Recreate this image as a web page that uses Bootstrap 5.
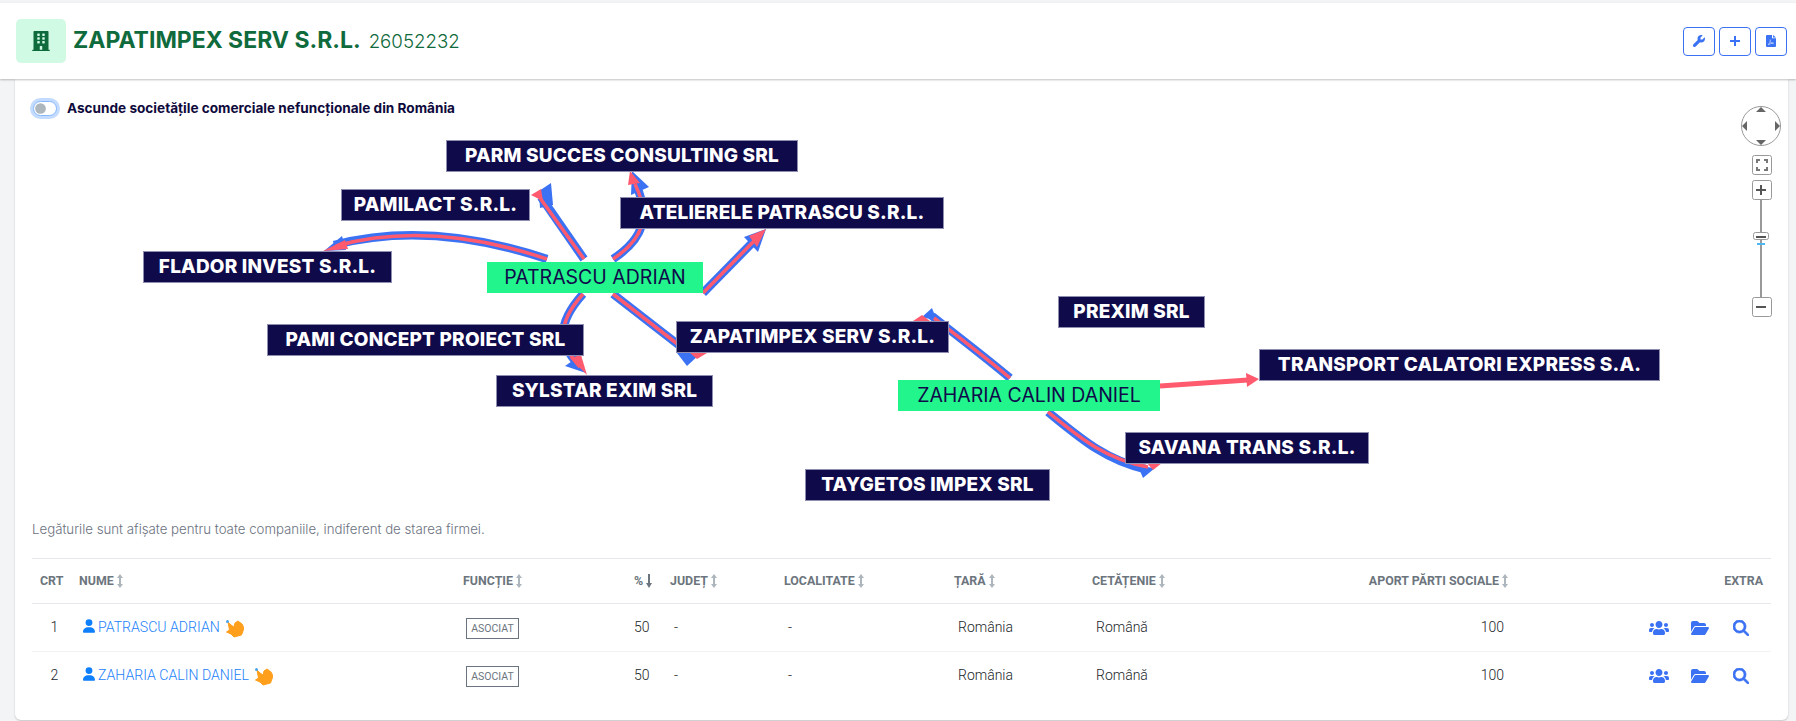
<!DOCTYPE html>
<html lang="ro">
  <head>
    <meta charset="UTF-8" />
    <title>ZAPATIMPEX SERV S.R.L.</title>
    <link href="https://cdn.jsdelivr.net/npm/bootstrap@5.3.3/dist/css/bootstrap.min.css" rel="stylesheet" />
    <style>
      html, body { height: 721px; overflow: hidden; }
      body { background: #f3f4f6; padding-top: 3px; font-family: Roboto, sans-serif; }

      /* header */
      .top-head { height: 76px; background: #fff; padding: 0 9px 0 16px; box-shadow: 0 1px 2px rgba(0,0,0,.25); position: relative; z-index: 2; }
      .head-ico { width: 50px; height: 44px; background: #d1fae5; border-radius: 5px; color: #0f6a3c; }
      .head-ico svg { width: 18px; height: 20px; fill: currentColor; }
      .head-name { font-family: Inter, sans-serif; font-weight: 700; font-size: 23px; color: #0f6a3c; margin: 0 0 0 7px; }
      .head-code { font-family: Inter, sans-serif; font-weight: 300; font-size: 18.700px; margin-left: 8px; color: #0f6a3c; }
      .head-btn { width: 32px; height: 29px; padding: 0; border-color: #3b71f3; color: #3b71f3; border-radius: 4px; }
      .head-btn svg { fill: #3b71f3; }

      /* main panel */
      .main-panel { height: 641px; margin: 0 8px 0 15px; background: #fff; border-radius: 0 0 6px 6px; box-shadow: 0 1px 2px rgba(0,0,0,.2); }
      .graph-wrap { position: relative; }
      .toggle-row { height: 41px; padding: 17px 0 0 18px; }
      .toggle-row .form-check-input { margin: 0 10px 0 0; width: 24px; height: 15px; border-color: #86b7fe; box-shadow: 0 0 0 3px rgba(13,110,253,.25); background-image: url("data:image/svg+xml,%3csvg xmlns='http://www.w3.org/2000/svg' viewBox='-4 -4 8 8'%3e%3ccircle r='3.300' fill='%23adb5bd'/%3e%3c/svg%3e"); }
      .toggle-row label { font-family: Inter, sans-serif; font-weight: 700; font-size: 13.600px; color: #0f0a3c; }
      .graph { position: relative; height: 399px; }
      .graph-lines { position: absolute; left: 0; top: 0; width: 1773px; height: 399px; }
      .nav-ctl { position: absolute; left: 1725px; top: 21px; width: 48px; height: 220px; }

      /* nodes of the diagram, left/top = page coord minus (15,120) */
      .gnode { position: absolute; height: 32px; display: flex; align-items: center; justify-content: center; font-family: Inter, sans-serif; white-space: nowrap; }
      .gnode.firm { background: #0f0a4a; color: #fff; font-weight: 800; font-size: 19px; letter-spacing: .2px; border: 1px solid #8f8db0; }
      .gnode.pers { background: #22f58b; color: #0f0a4a; font-weight: 400; font-size: 19.500px; }
      #n-parm { left: 431px; top: 20px; width: 352px; }
      #n-pamilact { left: 326px; top: 69px; width: 189px; }
      #n-flador { left: 128px; top: 131px; width: 249px; }
      #n-patrascu { left: 472px; top: 142px; width: 216px; height: 31px; }
      #n-pami { left: 252px; top: 204px; width: 317px; }
      #n-sylstar { left: 481px; top: 255px; width: 217px; }
      #n-atelier { left: 605px; top: 77px; width: 324px; }
      #n-zapa { left: 661px; top: 201px; width: 273px; }
      #n-zaharia { left: 883px; top: 260px; width: 262px; height: 31px; }
      #n-prexim { left: 1043px; top: 176px; width: 147px; }
      #n-transport { left: 1244px; top: 229px; width: 401px; }
      #n-savana { left: 1110px; top: 312px; width: 244px; }
      #n-taygetos { left: 790px; top: 349px; width: 245px; }

      .graph-note { font-family: Inter, sans-serif; font-weight: 300; font-size: 13.250px; color: #6b7280; line-height: 20px; margin: 0 0 19px 17px; }

      /* table */
      .assoc-wrap { margin: 0 17px; }
      .assoc { table-layout: fixed; width: 1739px; margin: 0; border-top: 1px solid #e5e7eb; }
      .assoc th { height: 45px; padding: 0 8px; font-size: 12.400px; font-weight: 700; color: #6c757d; text-transform: uppercase; white-space: nowrap; border-bottom: 1px solid #e5e7eb; vertical-align: middle; }
      .assoc td { height: 48px; padding: 0 8px; font-size: 14px; font-weight: 300; color: #212529; border-bottom: 1px solid #f1f2f4; vertical-align: middle; white-space: nowrap; }
      .assoc tr:last-child td { border-bottom: 0; }
      .assoc td.pad-x { padding-left: 12px; }
      .assoc td.pad-r { padding-right: 12px; }
      .assoc td.pad-n { padding-left: 14px; }
      .assoc td.pad-f { padding-left: 11px; }
      .srt { width: 6px; height: 14px; margin-left: 3px; vertical-align: -3px; }
      .person-link { color: #1a82fb; text-decoration: none; font-size: 14.100px; }
      .person-link svg.u { width: 12px; height: 14px; fill: #0d7efc; margin: 0 3px 0 4px; vertical-align: -1px; }
      .person-link svg.h { width: 18px; height: 18px; margin-left: 6px; vertical-align: -6px; }
      .func-tag { display: inline-block; width: 53px; height: 21px; line-height: 19px; border: 1px solid #6b7280; font-size: 10.500px; font-weight: 400; color: #6c757d; text-align: center; }
      .row-acts { gap: 22px; padding-right: 14px; }
      .row-acts svg { fill: #3b71f3; height: 16px; }
      .row-acts svg:nth-child(2) { margin-right: 2px; }
      .row-acts svg:nth-child(3) { stroke: #3b71f3; stroke-width: 24; }
    </style>
  </head>
  <body>
    <header class="top-head d-flex align-items-center justify-content-between">
      <div class="d-flex align-items-center">
        <div class="head-ico d-flex align-items-center justify-content-center">
          <svg viewBox="0 0 448 512"><path d="M436 480h-20V24c0-13.255-10.745-24-24-24H56C42.745 0 32 10.745 32 24v456H12c-6.627 0-12 5.373-12 12v20h448v-20c0-6.627-5.373-12-12-12zM128 76c0-6.627 5.373-12 12-12h40c6.627 0 12 5.373 12 12v40c0 6.627-5.373 12-12 12h-40c-6.627 0-12-5.373-12-12V76zm0 96c0-6.627 5.373-12 12-12h40c6.627 0 12 5.373 12 12v40c0 6.627-5.373 12-12 12h-40c-6.627 0-12-5.373-12-12v-40zm52 148h-40c-6.627 0-12-5.373-12-12v-40c0-6.627 5.373-12 12-12h40c6.627 0 12 5.373 12 12v40c0 6.627-5.373 12-12 12zm76 160h-64v-84c0-6.627 5.373-12 12-12h40c6.627 0 12 5.373 12 12v84zm64-172c0 6.627-5.373 12-12 12h-40c-6.627 0-12-5.373-12-12v-40c0-6.627 5.373-12 12-12h40c6.627 0 12 5.373 12 12v40zm0-96c0 6.627-5.373 12-12 12h-40c-6.627 0-12-5.373-12-12v-40c0-6.627 5.373-12 12-12h40c6.627 0 12 5.373 12 12v40zm0-96c0 6.627-5.373 12-12 12h-40c-6.627 0-12-5.373-12-12V76c0-6.627 5.373-12 12-12h40c6.627 0 12 5.373 12 12v40z"/></svg>
        </div>
        <h1 class="head-name">ZAPATIMPEX SERV S.R.L.<span class="head-code">26052232</span></h1>
      </div>
      <div class="d-flex gap-1">
        <button class="btn head-btn d-flex align-items-center justify-content-center" type="button">
          <svg width="12" height="12" viewBox="0 0 512 512"><path d="M352 320c88.400 0 160-71.600 160-160c0-15.300-2.200-30.100-6.200-44.200c-3.100-10.800-16.400-13.200-24.300-5.300l-76.800 76.800c-3 3-7.100 4.700-11.300 4.700H336c-8.800 0-16-7.200-16-16V118.600c0-4.200 1.700-8.300 4.700-11.300l76.800-76.800c7.900-7.900 5.400-21.200-5.300-24.300C382.100 2.200 367.300 0 352 0C263.600 0 192 71.600 192 160c0 19.100 3.400 37.500 9.500 54.500L19.900 396.100C7.200 408.800 0 426.100 0 444.100C0 481.600 30.400 512 67.900 512c18 0 35.300-7.200 48-19.900L297.500 310.500c17 6.200 35.400 9.500 54.500 9.500z"/></svg>
        </button>
        <button class="btn head-btn d-flex align-items-center justify-content-center" type="button">
          <svg width="10" height="10" viewBox="0 0 10 10"><path d="M4 0h2v4h4v2H6v4H4V6H0V4h4z"/></svg>
        </button>
        <button class="btn head-btn d-flex align-items-center justify-content-center" type="button">
          <svg width="10" height="12" viewBox="0 0 10 12"><path d="M1 0h5v3.200h4V11a1 1 0 0 1-1 1H1a1 1 0 0 1-1-1V1a1 1 0 0 1 1-1zM7 0l3 2.400H7z"/><path d="M4.200 4.500c.5 2-.6 4-2.200 5.200M4.500 7c1 1 2.500 1.300 3.500 1.100M2.500 9.700c1.500-1 3-1.500 4.500-1.600" fill="none" stroke="#cfdcfd" stroke-width=".8"/></svg>
        </button>
      </div>
    </header>

    <main class="main-panel">
      <div class="graph-wrap">
        <div class="toggle-row">
          <div class="form-check form-switch d-flex align-items-center m-0 p-0">
            <input class="form-check-input" type="checkbox" id="hideInactive" />
            <label class="form-check-label" for="hideInactive">Ascunde societățile comerciale nefuncționale din România</label>
          </div>
        </div>

        <div class="graph">
          <svg class="graph-lines" viewBox="15 120 1773 399" fill="none" stroke-linecap="butt">
            <!-- blue edges -->
            <g stroke="#3b71f3" stroke-width="8.500">
              <path d="M547 259Q430 220 334 245" />
              <path d="M584 259L541 197" />
              <path d="M613 259C645 238 650 215 636 185" />
              <path d="M703 293L755 240" />
              <path d="M583 294C555 325 560 345 578 364" />
              <path d="M613 294L680 346" />
              <path d="M1010 378C985 357 965 342 932 316" />
              <path d="M1048 412C1080 438 1105 460 1145 469" />
            </g>
            <g fill="#3b71f3">
              <path d="M551 183L553 205L540 208L539 191Z" />
              <path d="M342 236L346 250L324 251Z" />
              <path d="M649 187L631 195L632 171Z" />
              <path d="M744 237L766 229L758 252Z" />
              <path d="M565 366L578 357L586 373Z" />
              <path d="M677 353L687 366L701 353Z" />
              <path d="M932 308L922 317L937 321Z" />
              <path d="M1143 478L1138 466L1155 468Z" />
            </g>
            <!-- red edges -->
            <g stroke="#ff5a6e" stroke-width="3.500">
              <path d="M547 259Q430 220 336 246" />
              <path d="M584 259L540 198" />
              <path d="M613 259C645 238 650 215 635 184" />
              <path d="M703 293L755 240" />
              <path d="M583 294C555 325 560 345 580 367" />
              <path d="M613 294L680 346" />
              <path d="M1010 378C985 357 965 342 934 318" />
              <path d="M1048 412C1080 438 1105 459 1148 467" />
              <path d="M1160 386L1248 380" stroke-width="5" />
            </g>
            <g fill="#ff5a6e">
              <path d="M323 251L345 240L348 249Z" />
              <path d="M531 195L541 189L543 201Z" />
              <path d="M630 171L640 183L628 185Z" />
              <path d="M766 229L749 236L757 247Z" />
              <path d="M587 375L570 358L581 355Z" />
              <path d="M707 353L690 353L697 359Z" />
              <path d="M913 321L922 315L930 321Z" />
              <path d="M1162 463L1147 463L1153 470Z" />
              <path d="M1259 379L1246 373L1247 387Z" />
            </g>
          </svg>

          <div class="gnode firm" id="n-parm">PARM SUCCES CONSULTING SRL</div>
          <div class="gnode firm" id="n-pamilact">PAMILACT S.R.L.</div>
          <div class="gnode firm" id="n-flador">FLADOR INVEST S.R.L.</div>
          <div class="gnode firm" id="n-pami">PAMI CONCEPT PROIECT SRL</div>
          <div class="gnode firm" id="n-sylstar">SYLSTAR EXIM SRL</div>
          <div class="gnode firm" id="n-atelier">ATELIERELE PATRASCU S.R.L.</div>
          <div class="gnode firm" id="n-zapa">ZAPATIMPEX SERV S.R.L.</div>
          <div class="gnode firm" id="n-prexim">PREXIM SRL</div>
          <div class="gnode firm" id="n-transport">TRANSPORT CALATORI EXPRESS S.A.</div>
          <div class="gnode firm" id="n-savana">SAVANA TRANS S.R.L.</div>
          <div class="gnode firm" id="n-taygetos">TAYGETOS IMPEX SRL</div>
          <div class="gnode pers" id="n-patrascu">PATRASCU ADRIAN</div>
          <div class="gnode pers" id="n-zaharia">ZAHARIA CALIN DANIEL</div>
        </div>

        <svg class="nav-ctl" viewBox="1740 100 48 220">
          <circle cx="1761" cy="126" r="19.500" fill="#fff" stroke="#999" />
          <g fill="#666">
            <path d="M1761 107l5 5h-10zM1761 145l5-5h-10zM1742 126l5-5v10zM1780 126l-5-5v10z" />
          </g>
          <path d="M1761 200V297" stroke="#999" stroke-width="2" />
          <g fill="#fff" stroke="#999">
            <rect x="1752.500" y="155.500" width="19" height="19" rx="2" />
            <rect x="1752.500" y="180.500" width="19" height="19" rx="2" />
            <rect x="1753.500" y="232.500" width="15" height="7" rx="2" />
            <rect x="1752.500" y="297.500" width="19" height="19" rx="2" />
          </g>
          <path d="M1757 163v-3h3M1764 160h3v3M1767 167v3h-3M1760 170h-3v-3" fill="none" stroke="#777" stroke-width="2" />
          <path d="M1756 190h10M1761 185v10M1756 307h10M1756 237h10" fill="none" stroke="#555" stroke-width="2" />
          <path d="M1757 244h8" stroke="#4db8f0" stroke-width="2" />
        </svg>
      </div>

      <p class="graph-note">Legăturile sunt afișate pentru toate companiile, indiferent de starea firmei.</p>

      <div class="assoc-wrap">
        <table class="table assoc">
          <colgroup>
            <col style="width: 39px" /><col style="width: 384px" /><col style="width: 171px" /><col style="width: 36px" /><col style="width: 114px" /><col style="width: 170px" /><col style="width: 138px" /><col style="width: 246px" /><col style="width: 186px" /><col style="width: 255px" />
          </colgroup>
          <thead>
            <tr>
              <th>Crt</th>
              <th>Nume<svg class="srt" viewBox="0 0 6 14"><path d="M3 0l3 4H4v6h2l-3 4-3-4h2V4H0z" fill="#adb5bd" /></svg></th>
              <th>Funcție<svg class="srt" viewBox="0 0 6 14"><path d="M3 0l3 4H4v6h2l-3 4-3-4h2V4H0z" fill="#adb5bd" /></svg></th>
              <th>%<svg class="srt" viewBox="0 0 6 14"><path d="M2 0h2v9h2l-3 5-3-5h2z" fill="#6c757d" /></svg></th>
              <th>Județ<svg class="srt" viewBox="0 0 6 14"><path d="M3 0l3 4H4v6h2l-3 4-3-4h2V4H0z" fill="#adb5bd" /></svg></th>
              <th>Localitate<svg class="srt" viewBox="0 0 6 14"><path d="M3 0l3 4H4v6h2l-3 4-3-4h2V4H0z" fill="#adb5bd" /></svg></th>
              <th>Țară<svg class="srt" viewBox="0 0 6 14"><path d="M3 0l3 4H4v6h2l-3 4-3-4h2V4H0z" fill="#adb5bd" /></svg></th>
              <th>Cetățenie<svg class="srt" viewBox="0 0 6 14"><path d="M3 0l3 4H4v6h2l-3 4-3-4h2V4H0z" fill="#adb5bd" /></svg></th>
              <th class="text-end">Aport părti sociale<svg class="srt" viewBox="0 0 6 14"><path d="M3 0l3 4H4v6h2l-3 4-3-4h2V4H0z" fill="#adb5bd" /></svg></th>
              <th class="text-end">Extra</th>
            </tr>
          </thead>
          <tbody>
            <tr>
              <td class="text-center pad-n">1</td>
              <td><a class="person-link" href="#"><svg class="u" viewBox="0 0 448 512"><path d="M224 256A128 128 0 1 0 224 0a128 128 0 1 0 0 256zm-45.700 48C79.800 304 0 383.800 0 482.300C0 498.700 13.300 512 29.700 512H418.300c16.400 0 29.700-13.300 29.700-29.700C448 383.800 368.200 304 269.700 304H178.300z" /></svg>PATRASCU ADRIAN<svg class="h" viewBox="0 0 18 18"><path d="M2 2L5 5L8 7L9 3L12 1L16 4L18 8L15.500 15L8 17L5 14L.5 12L3.500 10Z" fill="#ff9f1c" stroke="#ff9f1c" stroke-linejoin="round" /><circle cx="1.500" cy="1.500" r="1.500" fill="#4aa3e8" /></svg></a></td>
              <td class="pad-f"><span class="func-tag">ASOCIAT</span></td>
              <td>50</td>
              <td class="pad-x">-</td>
              <td class="pad-x">-</td>
              <td class="pad-x">România</td>
              <td class="pad-x">Română</td>
              <td class="text-end pad-r">100</td>
              <td>
                <div class="d-flex justify-content-end align-items-center row-acts">
                  <svg width="20" viewBox="0 0 640 512"><path d="M96 224c35.300 0 64-28.700 64-64s-28.700-64-64-64-64 28.700-64 64 28.700 64 64 64zm448 0c35.300 0 64-28.700 64-64s-28.700-64-64-64-64 28.700-64 64 28.700 64 64 64zm32 32h-64c-17.600 0-33.500 7.100-45.100 18.600 40.300 22.100 68.900 62 75.100 109.400h66c17.700 0 32-14.300 32-32v-32c0-35.300-28.700-64-64-64zm-256 0c61.900 0 112-50.100 112-112S381.900 32 320 32 208 82.100 208 144s50.100 112 112 112zm76.800 32h-8.300c-20.800 10-43.900 16-68.500 16s-47.600-6-68.500-16h-8.300C179.600 288 128 339.600 128 403.200V432c0 26.500 21.500 48 48 48h288c26.500 0 48-21.500 48-48v-28.800c0-63.600-51.600-115.200-115.200-115.200zm-223.700-13.400C161.500 263.100 145.600 256 128 256H64c-35.300 0-64 28.700-64 64v32c0 17.700 14.300 32 32 32h65.900c6.300-47.400 34.900-87.300 75.200-109.400z" /></svg>
                  <svg width="18" viewBox="0 0 576 512"><path d="M88.700 223.800L0 375.800V96C0 60.700 28.700 32 64 32H181.500c17 0 33.300 6.700 45.300 18.700l26.500 26.500c12 12 28.300 18.700 45.300 18.700H416c35.300 0 64 28.700 64 64v32H144c-22.800 0-43.800 12.100-55.300 31.800zm27.600 16.100C122.100 230 132.600 224 144 224H544c11.500 0 22 6.100 27.700 16.100s5.700 22.200-.1 32.100l-112 192C453.900 474 443.400 480 432 480H32c-11.500 0-22-6.100-27.700-16.100s-5.700-22.200 .1-32.100l112-192z" /></svg>
                  <svg width="16" viewBox="0 0 512 512"><path d="M416 208c0 45.900-14.900 88.300-40 122.700L502.600 457.400c12.500 12.500 12.500 32.800 0 45.300s-32.800 12.500-45.300 0L330.700 376c-34.400 25.200-76.800 40-122.700 40C93.100 416 0 322.900 0 208S93.100 0 208 0S416 93.100 416 208zM208 352a144 144 0 1 0 0-288 144 144 0 1 0 0 288z" /></svg>
                </div>
              </td>
            </tr>
            <tr>
              <td class="text-center pad-n">2</td>
              <td><a class="person-link" href="#"><svg class="u" viewBox="0 0 448 512"><path d="M224 256A128 128 0 1 0 224 0a128 128 0 1 0 0 256zm-45.700 48C79.800 304 0 383.800 0 482.300C0 498.700 13.300 512 29.700 512H418.300c16.400 0 29.700-13.300 29.700-29.700C448 383.800 368.200 304 269.700 304H178.300z" /></svg>ZAHARIA CALIN DANIEL<svg class="h" viewBox="0 0 18 18"><path d="M2 2L5 5L8 7L9 3L12 1L16 4L18 8L15.500 15L8 17L5 14L.5 12L3.500 10Z" fill="#ff9f1c" stroke="#ff9f1c" stroke-linejoin="round" /><circle cx="1.500" cy="1.500" r="1.500" fill="#4aa3e8" /></svg></a></td>
              <td class="pad-f"><span class="func-tag">ASOCIAT</span></td>
              <td>50</td>
              <td class="pad-x">-</td>
              <td class="pad-x">-</td>
              <td class="pad-x">România</td>
              <td class="pad-x">Română</td>
              <td class="text-end pad-r">100</td>
              <td>
                <div class="d-flex justify-content-end align-items-center row-acts">
                  <svg width="20" viewBox="0 0 640 512"><path d="M96 224c35.300 0 64-28.700 64-64s-28.700-64-64-64-64 28.700-64 64 28.700 64 64 64zm448 0c35.300 0 64-28.700 64-64s-28.700-64-64-64-64 28.700-64 64 28.700 64 64 64zm32 32h-64c-17.600 0-33.500 7.100-45.100 18.600 40.300 22.100 68.900 62 75.100 109.400h66c17.700 0 32-14.300 32-32v-32c0-35.300-28.700-64-64-64zm-256 0c61.900 0 112-50.100 112-112S381.900 32 320 32 208 82.100 208 144s50.100 112 112 112zm76.800 32h-8.300c-20.800 10-43.900 16-68.500 16s-47.600-6-68.500-16h-8.300C179.600 288 128 339.600 128 403.200V432c0 26.500 21.500 48 48 48h288c26.500 0 48-21.500 48-48v-28.800c0-63.600-51.600-115.200-115.200-115.200zm-223.700-13.400C161.500 263.100 145.600 256 128 256H64c-35.300 0-64 28.700-64 64v32c0 17.700 14.300 32 32 32h65.900c6.300-47.400 34.900-87.300 75.200-109.400z" /></svg>
                  <svg width="18" viewBox="0 0 576 512"><path d="M88.700 223.800L0 375.800V96C0 60.700 28.700 32 64 32H181.500c17 0 33.300 6.700 45.300 18.700l26.500 26.500c12 12 28.300 18.700 45.300 18.700H416c35.300 0 64 28.700 64 64v32H144c-22.800 0-43.800 12.100-55.300 31.800zm27.600 16.100C122.100 230 132.600 224 144 224H544c11.500 0 22 6.100 27.700 16.100s5.700 22.200-.1 32.100l-112 192C453.900 474 443.400 480 432 480H32c-11.500 0-22-6.100-27.700-16.100s-5.700-22.200 .1-32.100l112-192z" /></svg>
                  <svg width="16" viewBox="0 0 512 512"><path d="M416 208c0 45.900-14.900 88.300-40 122.700L502.600 457.400c12.500 12.500 12.500 32.800 0 45.300s-32.800 12.500-45.300 0L330.700 376c-34.400 25.200-76.800 40-122.700 40C93.100 416 0 322.900 0 208S93.100 0 208 0S416 93.100 416 208zM208 352a144 144 0 1 0 0-288 144 144 0 1 0 0 288z" /></svg>
                </div>
              </td>
            </tr>
          </tbody>
        </table>
      </div>
    </main>

    <script src="https://cdn.jsdelivr.net/npm/bootstrap@5.3.3/dist/js/bootstrap.bundle.min.js"></script>
  </body>
</html>
